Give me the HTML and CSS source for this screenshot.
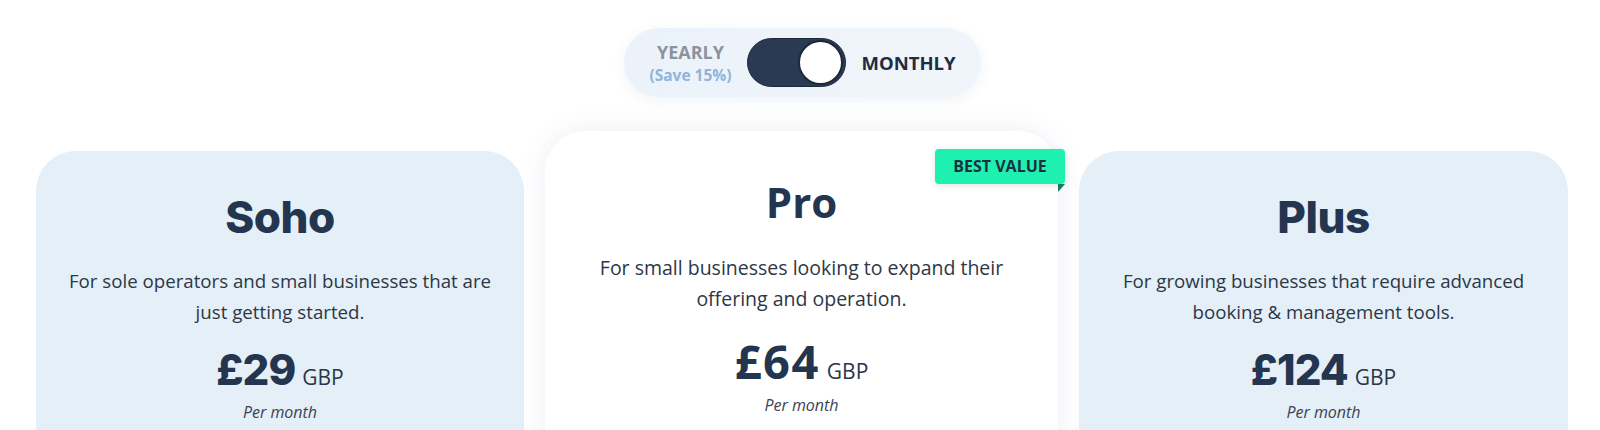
FILE: index.html
```html
<!DOCTYPE html>
<html lang="en">
<head>
  <meta charset="UTF-8">
  <title>Pricing</title>
  <link rel="stylesheet" href="styles.css">
</head>
<body>
  <div class="page">
    <div class="billing">
      <div class="billing-yearly">
        <span class="billing-label">YEARLY</span>
        <span class="billing-save">(Save 15%)</span>
      </div>
      <span class="switch"><span class="knob"></span></span>
      <span class="billing-label billing-on">MONTHLY</span>
    </div>

    <ul class="plans">
      <li class="plan">
        <h2 class="plan-name">Soho</h2>
        <p class="plan-desc">For sole operators and small businesses that are just getting started.</p>
        <div class="plan-price"><strong>£29</strong><span>GBP</span></div>
        <p class="plan-per">Per month</p>
      </li>
      <li class="plan pro">
        <span class="badge">BEST VALUE</span>
        <h2 class="plan-name">Pro</h2>
        <p class="plan-desc">For small businesses looking to expand their offering and operation.</p>
        <div class="plan-price"><strong>£64</strong><span>GBP</span></div>
        <p class="plan-per">Per month</p>
      </li>
      <li class="plan">
        <h2 class="plan-name">Plus</h2>
        <p class="plan-desc">For growing businesses that require advanced booking &amp; management tools.</p>
        <div class="plan-price"><strong>£124</strong><span>GBP</span></div>
        <p class="plan-per">Per month</p>
      </li>
    </ul>
  </div>
</body>
</html>
```

FILE: styles.css
```css
*{ margin: 0; padding: 0; list-style: none; box-sizing: border-box; }
body{
  background: #fff;
  font-family: "Open Sans", "Noto Sans", sans-serif;
  color: #2f3a4a;
  overflow: hidden;
}
.page{
  padding: 28px 31px 0 36px;
}

/* billing switch */
.billing{
  display: flex;
  align-items: center;
  gap: 15px;
  width: fit-content;
  height: 69px;
  margin: 0 auto;
  padding: 0 25px;
  border-radius: 35px;
  background: linear-gradient(90deg, #ebf2f9, #f0f5fa);
  box-shadow: 0 4px 14px rgba(40, 80, 130, .07);
}
.billing-yearly{
  display: flex;
  flex-direction: column;
  align-items: center;
}
.billing-label{
  font-size: 18px;
  font-weight: 700;
  line-height: 24px;
  color: #8c939c;
}
.billing-save{
  font-size: 15.5px;
  font-weight: 700;
  line-height: 22px;
  color: #8fb5da;
}
.billing-on{
  font-size: 18.5px;
  color: #1f2d42;
  margin-left: 1px;
}
.switch{
  display: flex;
  justify-content: flex-end;
  align-items: center;
  width: 99px;
  height: 49px;
  padding: 2px;
  border-radius: 25px;
  background: #2a3a52;
  border: 1px solid #1c293b;
}
.knob{
  width: 45px;
  height: 45px;
  border-radius: 50%;
  background: #fff;
  border: 2px solid #1c293b;
}

/* plans */
.plans{
  display: flex;
  align-items: flex-start;
  gap: 21px;
  margin-top: 34px;
}
.plan{
  flex: 0 0 488px;
  height: 420px;
  margin-top: 20px;
  padding: 38px 30px 0;
  border-radius: 40px;
  background: #e4eff7;
  text-align: center;
}
.plan:last-child{ flex-basis: 489px; }
.plan-name{
  font-family: Inter, "Noto Sans", sans-serif;
  font-size: 44px;
  font-weight: 800;
  line-height: 56px;
  letter-spacing: -.5px;
  color: #243550;
}
.plan-desc{
  margin-top: 21px;
  font-size: 18.7px;
  line-height: 30.5px;
  color: #2c3747;
}
.plan-price{
  margin-top: 18px;
  line-height: 50px;
  color: #243550;
}
.plan-price strong{
  font-family: Inter, "Noto Sans", sans-serif;
  font-size: 42px;
  font-weight: 800;
  letter-spacing: -1px;
}
.plan-price span{
  margin-left: 7px;
  font-size: 21px;
  color: #2a3547;
}
.plan-per{
  margin-top: -4px;
  font-size: 16px;
  font-style: italic;
  line-height: 24px;
  color: #3a4352;
}

.pro{
  position: relative;
  flex-basis: 513px;
  margin-top: 0;
  padding: 43px 40px 0;
  background: #fff;
  box-shadow: 0 0 28px rgba(40, 80, 140, .09);
}
.pro .plan-name{
  font-family: "Open Sans", sans-serif;
  font-size: 42px;
  font-weight: 700;
  letter-spacing: 0;
}
.pro .plan-desc{
  margin-top: 23px;
  font-size: 19.5px;
}
.pro .plan-price{ margin-top: 22px; }
.pro .plan-price strong{
  font-family: "Open Sans", sans-serif;
  font-size: 47px;
  font-weight: 700;
  letter-spacing: 1.5px;
}
.pro .plan-per{ margin-top: -5px; }

.badge{
  position: absolute;
  top: 18px;
  right: -7px;
  width: 130px;
  height: 35px;
  border-radius: 4px;
  background: #1ef0b0;
  box-shadow: 0 2px 6px rgba(0, 60, 40, .12);
  font-size: 16px;
  font-weight: 700;
  line-height: 35px;
  color: #1c3140;
}
.badge::after{
  content: "";
  position: absolute;
  top: 100%;
  right: 0;
  border-top: 8px solid #137a5c;
  border-right: 7px solid transparent;
}
```
